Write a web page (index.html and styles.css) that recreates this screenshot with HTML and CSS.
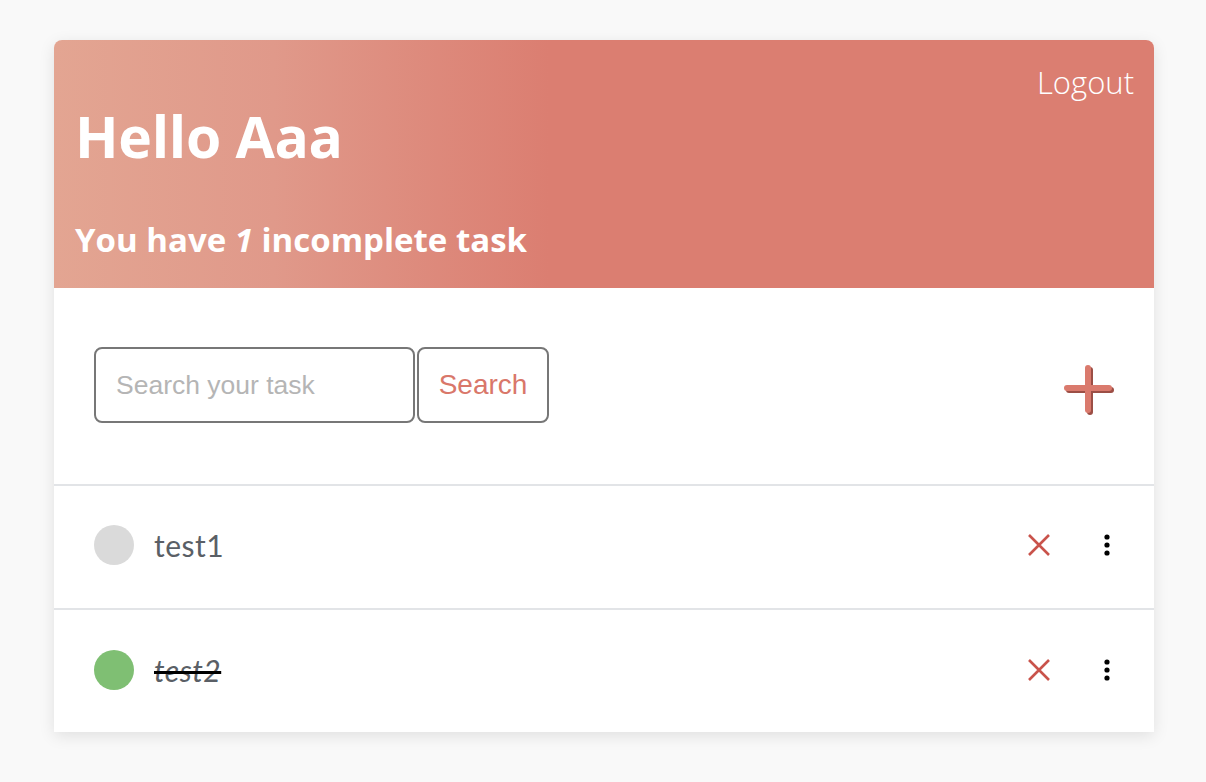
FILE: index.html
```html
<!DOCTYPE html>
<html lang="en">
<head>
<meta charset="utf-8">
<title>Todo</title>
<link rel="stylesheet" href="styles.css">
</head>
<body>
<main class="card">
  <header class="hero">
    <div class="hero-top">
      <a class="logout" href="#">Logout</a>
    </div>
    <h1 class="greeting">Hello Aaa</h1>
    <p class="summary">You have <em>1</em> incomplete task</p>
  </header>
  <section class="toolbar">
    <form class="search">
      <input class="search-input" type="text" placeholder="Search your task">
      <button class="search-btn" type="button">Search</button>
    </form>
    <button class="add-btn" type="button" aria-label="Add task">
      <svg width="50" height="50" viewBox="0 0 50 50">
        <g stroke="#9c4e45" stroke-width="6" stroke-linecap="round">
          <line x1="5" y1="25" x2="47" y2="25"/>
          <line x1="26" y1="5" x2="26" y2="47"/>
        </g>
        <g stroke="#da7a6d" stroke-width="6" stroke-linecap="round">
          <line x1="3" y1="23" x2="45" y2="23"/>
          <line x1="24" y1="3" x2="24" y2="45"/>
        </g>
      </svg>
    </button>
  </section>
  <ul class="tasks">
    <li class="task">
      <span class="dot"></span>
      <span class="task-name">test1</span>
      <button class="icon-btn del" type="button" aria-label="Delete">
        <svg width="24" height="24" viewBox="0 0 24 24"><path d="M2 2L22 22M22 2L2 22" stroke="#c9534b" stroke-width="2.6"/></svg>
      </button>
      <button class="icon-btn more" type="button" aria-label="More">
        <svg width="8" height="22" viewBox="0 0 8 22"><circle cx="4" cy="3" r="2.6"/><circle cx="4" cy="11" r="2.6"/><circle cx="4" cy="19" r="2.6"/></svg>
      </button>
    </li>
    <li class="task done">
      <span class="dot"></span>
      <span class="task-name">test2</span>
      <button class="icon-btn del" type="button" aria-label="Delete">
        <svg width="24" height="24" viewBox="0 0 24 24"><path d="M2 2L22 22M22 2L2 22" stroke="#c9534b" stroke-width="2.6"/></svg>
      </button>
      <button class="icon-btn more" type="button" aria-label="More">
        <svg width="8" height="22" viewBox="0 0 8 22"><circle cx="4" cy="3" r="2.6"/><circle cx="4" cy="11" r="2.6"/><circle cx="4" cy="19" r="2.6"/></svg>
      </button>
    </li>
  </ul>
</main>
</body>
</html>
```

FILE: styles.css
```css
* { box-sizing: border-box; }
html, body { margin: 0; padding: 0; }
body {
  background: #f9f9f9;
  font-family: "Noto Sans", "Open Sans", sans-serif;
  padding: 40px 52px 50px 54px;
}
.card {
  width: 1100px;
  background: #fff;
  border-radius: 8px 8px 0 0;
  box-shadow: 0 4px 16px rgba(0,0,0,0.10);
}
.hero {
  height: 248px;
  border-radius: 8px 8px 0 0;
  background: linear-gradient(90deg, #e3a592 0%, #e0998a 20%, #db7e71 45%, #db7e71 100%);
  color: #fff;
  padding: 21px 20px 0 21px;
  display: flex;
  flex-direction: column;
}
.hero-top { display: flex; justify-content: flex-end; height: 42px; }
.logout {
  color: #fff;
  text-decoration: none;
  font-family: "Open Sans", sans-serif;
  font-weight: 300;
  font-size: 31px;
  line-height: 42px;
}
.greeting {
  margin: -7px 0 0 0;
  font-family: "Open Sans", sans-serif;
  font-weight: 700;
  font-size: 57px;
  line-height: 80px;
  letter-spacing: -0.3px;
}
.summary {
  margin: 44px 0 0 0;
  font-family: "Open Sans", sans-serif;
  font-weight: 700;
  font-size: 33px;
  line-height: 40px;
  letter-spacing: 0;
}
.summary em { font-style: italic; }
.toolbar {
  height: 198px;
  border-bottom: 2px solid #e2e4e7;
  display: flex;
  align-items: center;
  justify-content: space-between;
  padding: 0 40px 0 40px;
}
.search { display: flex; gap: 2px; margin-top: -2px; }
.search-input {
  width: 321px;
  height: 76px;
  border: 2px solid #777;
  border-radius: 8px;
  padding: 0 20px;
  font-family: "Liberation Sans", Arial, sans-serif;
  font-size: 26.5px;
  color: #333;
  outline: none;
}
.search-input::placeholder { color: #b5b5b5; }
.search-btn {
  width: 132px;
  height: 76px;
  border: 2px solid #777;
  border-radius: 8px;
  background: #fff;
  color: #d9776a;
  font-family: "Liberation Sans", Arial, sans-serif;
  font-size: 28px;
  padding: 0;
}
.add-btn {
  border: 0;
  background: none;
  padding: 0;
  width: 50px;
  height: 50px;
  display: block;
  margin-top: 8px;
}
.add-btn svg { display: block; }
.tasks { list-style: none; margin: 0; padding: 0; }
.task {
  height: 124px;
  display: flex;
  align-items: center;
  padding: 0 38px 4px 40px;
  border-bottom: 2px solid #e2e4e7;
}
.task:last-child { border-bottom: 0; height: 122px; padding-bottom: 2px; }
.dot {
  width: 40px;
  height: 40px;
  border-radius: 50%;
  background: #dadada;
  flex: none;
}
.done .dot { background: #7fbf73; }
.task-name {
  margin-left: 20px;
  flex: 1;
  font-family: "Lato", sans-serif;
  font-weight: 400;
  font-size: 30px;
  color: #5a5f66;
  letter-spacing: 0.5px;
}
.done .task-name {
  font-style: italic;
  text-decoration: line-through;
  text-decoration-color: #000;
  text-decoration-thickness: 3px;
}
.icon-btn {
  border: 0;
  background: none;
  padding: 0;
  display: flex;
  align-items: center;
  justify-content: center;
}
.del { width: 24px; height: 24px; margin-right: 52px; }
.more { width: 8px; height: 22px; margin-right: 5px; }
.more svg { fill: #000; }
```
